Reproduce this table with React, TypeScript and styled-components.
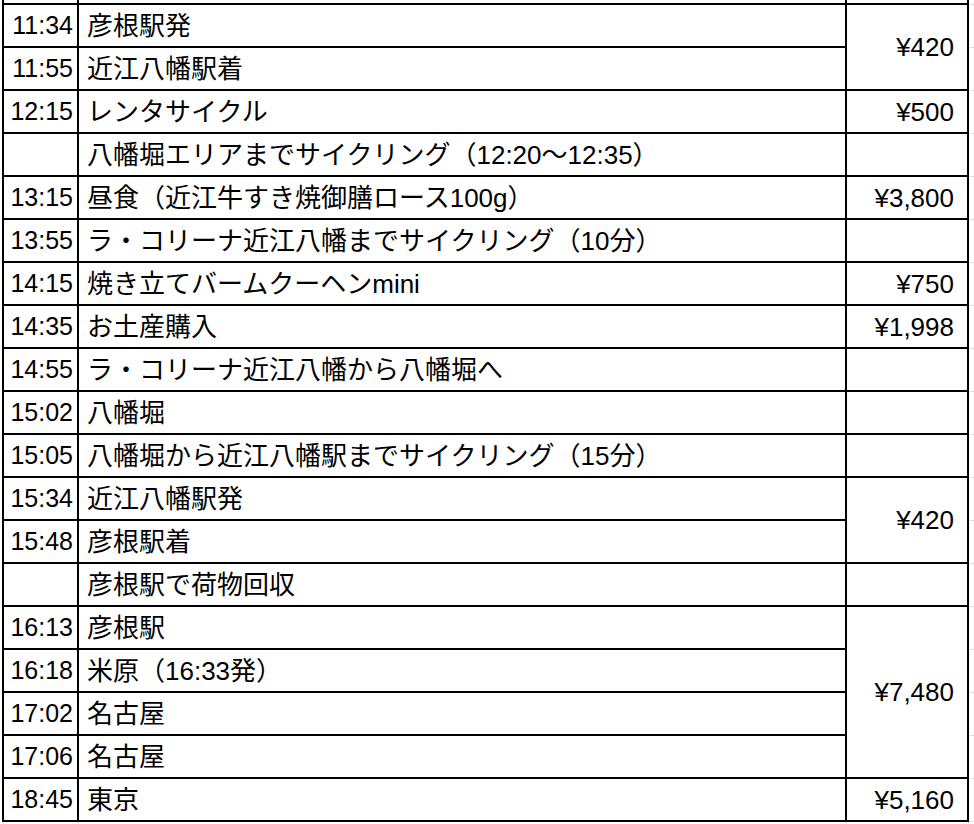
import styled, { createGlobalStyle } from "styled-components";

const GlobalStyle = createGlobalStyle`
  html, body {
    margin: 0;
    padding: 0;
    background: #ffffff;
    overflow: hidden;
  }

  body {
    font-family: "Liberation Sans", "Noto Sans CJK JP", sans-serif;
    color: #000000;
  }
`;

const Sheet = styled.div`
  width: 974px;
  height: 824px;
  overflow: hidden;
`;

const Grid = styled.table`
  border-collapse: collapse;
  table-layout: fixed;
  width: 1065px;
  margin: -40px 0 0 2px;
`;

const Cell = styled.td<{ $align?: "left" | "right"; $pad?: number; $size?: number }>`
  border: 2px solid #000000;
  height: 43px;
  box-sizing: border-box;
  padding: 0 ${(p) => p.$pad ?? 8}px;
  font-size: ${(p) => p.$size ?? 26}px;
  text-align: ${(p) => p.$align ?? "left"};
  vertical-align: middle;
  white-space: nowrap;
  overflow: hidden;
  line-height: 1;
`;

const GhostCell = styled.td`
  border: 1px solid #e2e2e2;
  height: 43px;
  box-sizing: border-box;
  padding: 0;
`;

interface Row {
  time: string;
  label: string;
  price?: string;
  span?: number;
}

// price === undefined means the row is covered by a merged price cell above
const rows: Row[] = [
  { time: "11:34", label: "彦根駅発", price: "¥420", span: 2 },
  { time: "11:55", label: "近江八幡駅着" },
  { time: "12:15", label: "レンタサイクル", price: "¥500" },
  { time: "", label: "八幡堀エリアまでサイクリング（12:20〜12:35）", price: "" },
  { time: "13:15", label: "昼食（近江牛すき焼御膳ロース100g）", price: "¥3,800" },
  { time: "13:55", label: "ラ・コリーナ近江八幡までサイクリング（10分）", price: "" },
  { time: "14:15", label: "焼き立てバームクーヘンmini", price: "¥750" },
  { time: "14:35", label: "お土産購入", price: "¥1,998" },
  { time: "14:55", label: "ラ・コリーナ近江八幡から八幡堀へ", price: "" },
  { time: "15:02", label: "八幡堀", price: "" },
  { time: "15:05", label: "八幡堀から近江八幡駅までサイクリング（15分）", price: "" },
  { time: "15:34", label: "近江八幡駅発", price: "¥420", span: 2 },
  { time: "15:48", label: "彦根駅着" },
  { time: "", label: "彦根駅で荷物回収", price: "" },
  { time: "16:13", label: "彦根駅", price: "¥7,480", span: 4 },
  { time: "16:18", label: "米原（16:33発）" },
  { time: "17:02", label: "名古屋" },
  { time: "17:06", label: "名古屋" },
  { time: "18:45", label: "東京", price: "¥5,160" },
];

export default function App() {
  return (
    <>
      <GlobalStyle />
      <Sheet>
        <Grid>
          <colgroup>
            <col style={{ width: 75 }} />
            <col style={{ width: 768 }} />
            <col style={{ width: 122 }} />
            <col style={{ width: 100 }} />
          </colgroup>
          <tbody>
            <tr>
              <Cell />
              <Cell />
              <Cell />
              <GhostCell />
            </tr>
            {rows.map((r, i) => (
              <tr key={i}>
                <Cell $align="right" $pad={4} $size={25}>
                  {r.time}
                </Cell>
                <Cell>{r.label}</Cell>
                {r.price !== undefined && (
                  <Cell $align="right" $pad={13} rowSpan={r.span ?? 1}>
                    {r.price}
                  </Cell>
                )}
                <GhostCell />
              </tr>
            ))}
            <tr>
              <GhostCell />
              <GhostCell />
              <GhostCell />
              <GhostCell />
            </tr>
          </tbody>
        </Grid>
      </Sheet>
    </>
  );
}
